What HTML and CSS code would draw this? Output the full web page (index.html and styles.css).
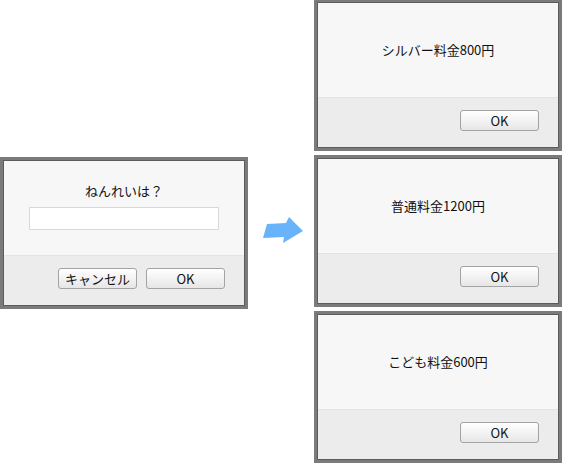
FILE: index.html
```html
<!DOCTYPE html>
<html lang="ja">
<head>
<meta charset="utf-8">
<link rel="stylesheet" href="styles.css">
</head>
<body>
<div class="canvas">
  <div class="dialog prompt">
    <div class="dlg-body">
      <p class="msg">ねんれいは？</p>
      <div class="field"></div>
    </div>
    <div class="dlg-foot">
      <span class="btn">キャンセル</span>
      <span class="btn">OK</span>
    </div>
  </div>
  <svg class="arrow" width="42" height="30" viewBox="0 0 42 30">
    <polygon points="4,8 23,7 26,1 40,15 20,27 21,21 0,22" fill="#69b3fb"/>
  </svg>
  <div class="stack">
    <div class="dialog">
      <div class="dlg-body center"><p class="msg">シルバー料金800円</p></div>
      <div class="dlg-foot"><span class="btn">OK</span></div>
    </div>
    <div class="dialog">
      <div class="dlg-body center"><p class="msg">普通料金1200円</p></div>
      <div class="dlg-foot"><span class="btn">OK</span></div>
    </div>
    <div class="dialog">
      <div class="dlg-body center"><p class="msg">こども料金600円</p></div>
      <div class="dlg-foot"><span class="btn">OK</span></div>
    </div>
  </div>
</div>
</body>
</html>
```

FILE: styles.css
```css
html, body {
  margin: 0;
  padding: 0;
  background: #ffffff;
}
body {
  font-family: "Noto Sans CJK JP", "Liberation Sans", sans-serif;
  font-size: 13px;
  color: #111;
}
.canvas {
  width: 564px;
  height: 466px;
  display: flex;
  align-items: center;
}
.dialog {
  width: 240px;
  border: 3px solid #7b7b7b;
  outline: 1px solid #5c5c5c;
  outline-offset: -4px;
  box-sizing: content-box;
  background: #f7f7f7;
  display: flex;
  flex-direction: column;
  padding: 1px;
}
.dlg-body {
  height: 95px;
  background: #f7f7f7;
  border-bottom: 1px solid #e3e3e3;
  box-sizing: border-box;
  display: flex;
  flex-direction: column;
  align-items: center;
  padding-top: 22px;
}
.dlg-body.center {
  padding-top: 39px;
}
.msg {
  margin: 0;
  line-height: 16px;
  height: 16px;
}
.field {
  margin-top: 8px;
  width: 188px;
  height: 21px;
  background: #fff;
  border: 1px solid #d9d9d9;
}
.dlg-foot {
  height: 49px;
  background: #ececec;
  display: flex;
  justify-content: flex-end;
  align-items: flex-start;
  gap: 9px;
  padding: 12px 19px 0 0;
  box-sizing: border-box;
}
.btn {
  width: 79px;
  height: 21px;
  box-sizing: border-box;
  border: 1px solid #a3a3a3;
  border-radius: 3px;
  background: linear-gradient(#ffffff, #e6e6e6);
  display: flex;
  align-items: center;
  justify-content: center;
  font-size: 13px;
  line-height: 1;
  color: #111;
}
.arrow {
  margin-left: 15px;
  margin-right: 9px;
  margin-top: -4px;
}
.stack {
  display: flex;
  flex-direction: column;
  gap: 4px;
  margin-top: -4px;
}
```
